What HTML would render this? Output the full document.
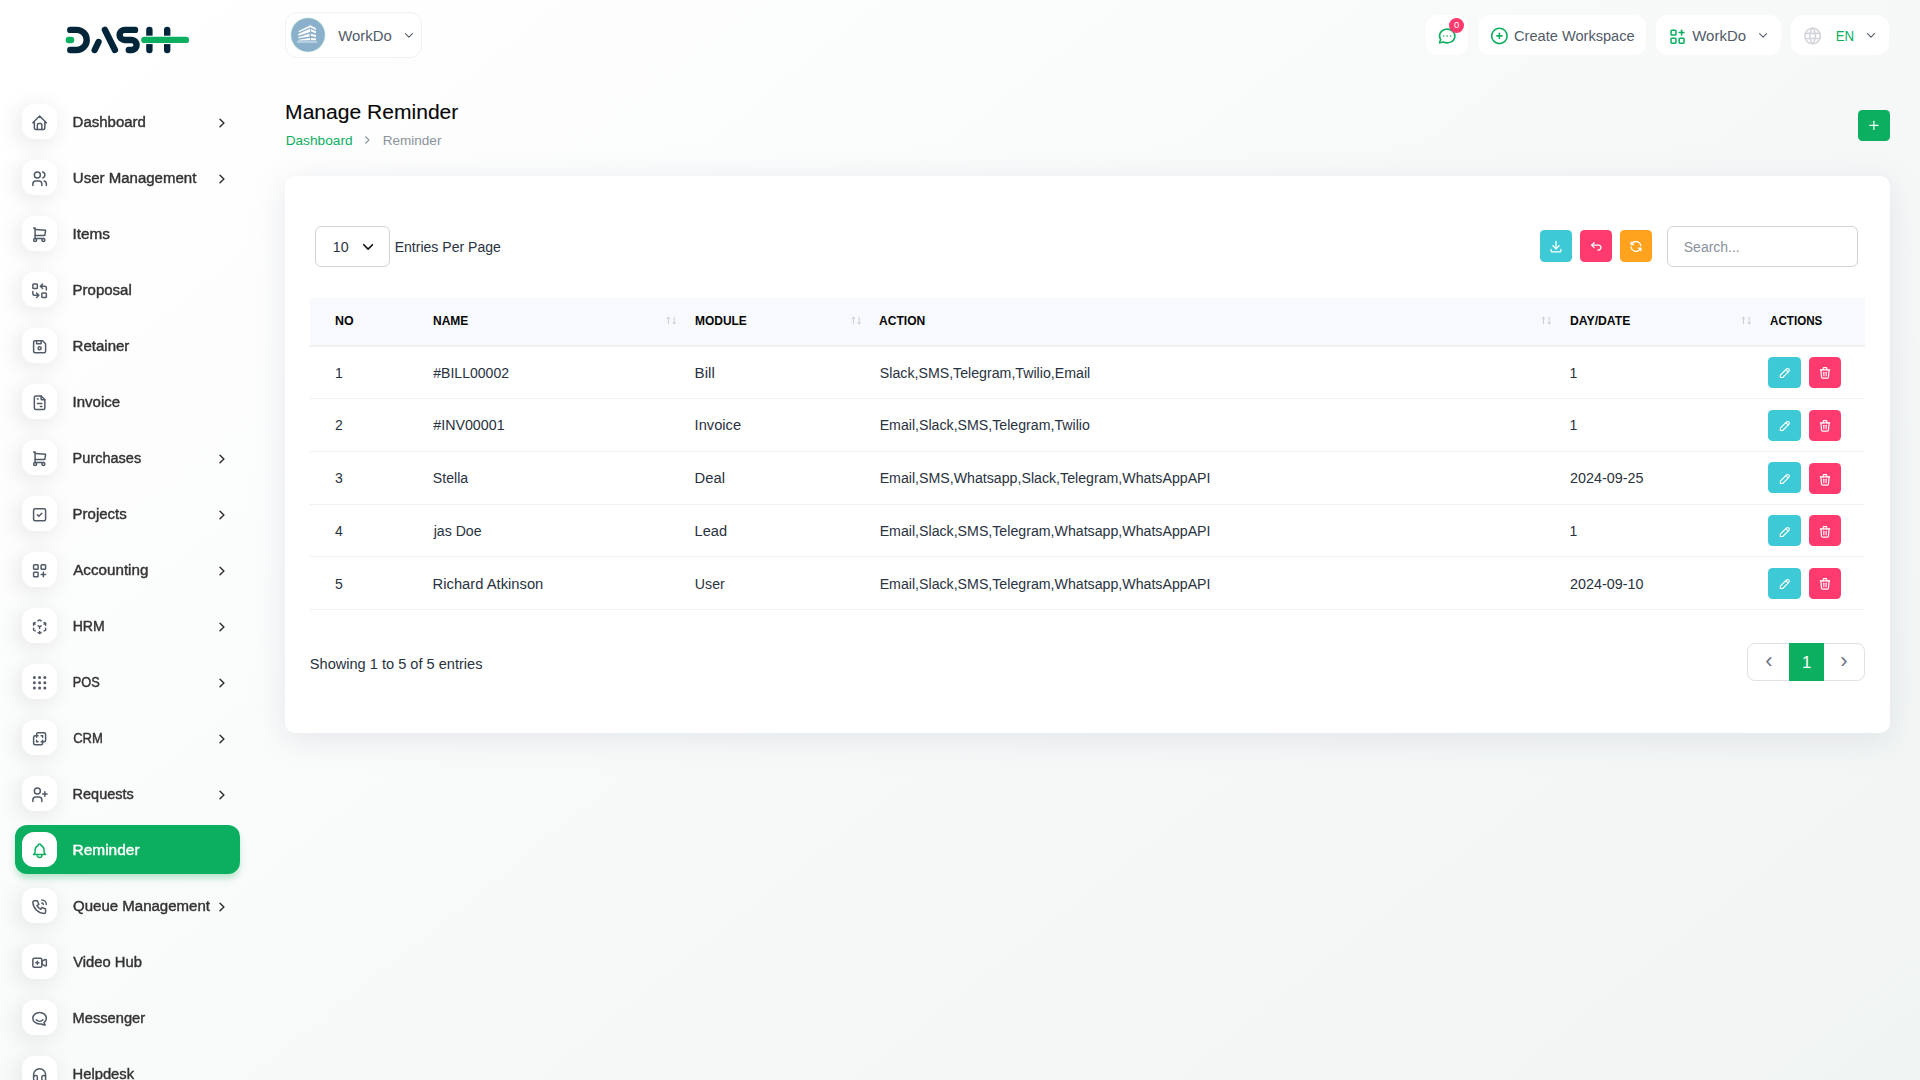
<!DOCTYPE html>
<html lang="en">
<head>
<meta charset="utf-8">
<title>Manage Reminder</title>
<style>
*{box-sizing:border-box;margin:0;padding:0}
html,body{width:1920px;height:1080px;overflow:hidden}
body{font-family:"Liberation Sans",sans-serif;font-size:14px;color:#293240;
 background:linear-gradient(141.55deg,rgba(240,244,243,0) 3.46%,#f0f4f3 99.86%),#fff;position:relative}
svg{display:block}
.t{position:absolute;white-space:nowrap;transform-origin:0 50%}
.sb{-webkit-text-stroke:.4px currentColor}
.mb{-webkit-text-stroke:.12px currentColor}
.ic{position:absolute;left:0;top:0;fill:none;stroke-linecap:round;stroke-linejoin:round}
.logo{position:absolute;left:60px;top:20px}
.nav{position:absolute;left:0;top:94px;width:280px;list-style:none;will-change:transform}
.nav li{position:relative;height:56px}
.nav .mi{position:absolute;left:22px;top:10px;width:35px;height:35px;border-radius:12px;background:#fff;
 box-shadow:-3px 4px 23px rgba(0,0,0,.1)}
.nav .mi svg{position:absolute;left:0;top:0;transform:translate(8.6px,9.7px);width:18px;height:18px;fill:none;stroke:#525b69;stroke-width:2;stroke-linecap:round;stroke-linejoin:round}
.nav .tx{position:absolute;left:72.6px;top:19px;line-height:18px;font-size:14px;color:#333;white-space:nowrap;-webkit-text-stroke:.4px #333;transform-origin:0 50%}
.nav .ch{position:absolute;left:216px;top:23px;width:12px;height:12px;fill:none;stroke:#333;stroke-width:1.5;stroke-linecap:round;stroke-linejoin:round}
.nav li.act::before{content:"";position:absolute;left:15px;top:3px;width:225px;height:49px;border-radius:12px;background:#0caf60;
 box-shadow:0 5px 7px -1px rgba(12,175,96,.3)}
.nav li.act .tx{color:#fff;-webkit-text-stroke:.4px #fff}
.nav li.act .mi{box-shadow:none}
.nav li.act .mi svg{stroke:#0caf60}
.hb{position:absolute;top:15px;height:40px;border-radius:12px;background:#fff}
.card{position:absolute;left:285px;top:176px;width:1605px;height:557px;background:#fff;border-radius:10px;
 box-shadow:0 6px 30px rgba(182,186,203,.3)}
.btn{position:absolute;border-radius:4.5px}
.fc{position:absolute;border:1px solid #ced4da;border-radius:6px;background:#fff}
table{position:absolute;left:310px;top:298px;width:1555px;border-collapse:collapse;table-layout:fixed}
th{height:48px;background:#f8f9fd;text-align:left;font-size:13px;font-weight:700;color:#060606;padding:0 0 2.5px 10.5px;border-bottom:2px solid #f1f1f1;position:relative;white-space:nowrap}
td{height:52.7px;padding:1px 0 0 10.5px;font-size:14px;color:#293240;border-bottom:1px solid #f1f1f1;white-space:nowrap;position:relative}
th:first-child,td:first-child{padding-left:25px}
th span,td span{display:inline-block;transform-origin:0 50%}
.so{position:absolute;right:8.5px;top:17px;width:10px;height:11px;fill:none;stroke:#c6c8cc;stroke-width:.9;stroke-linecap:round;stroke-linejoin:round}
.r2 td>span:not(.btn){position:relative;top:-1px}
td .btn{top:9.5px;height:31px}
tr+tr td .btn{top:10.5px}
tr.r3 td .btn+.btn{top:11.5px}
td .btn svg{position:absolute;left:50%;top:50%;margin:-7px 0 0 -7px;transform:translateY(.8px);width:14px;height:14px;fill:none;stroke:#fff;stroke-width:2;stroke-linecap:round;stroke-linejoin:round}
.pg{position:absolute;left:1747px;top:643px;width:118px;height:38px;border:1px solid #dee2e6;border-radius:8px;background:#fff}
</style>
</head>
<body>
<svg class="logo" width="140" height="40" viewBox="0 0 140 40" fill="none" stroke-linecap="round" stroke-linejoin="round" stroke-width="6.4" role="img" aria-label="DASH"><title>DASH</title>
<g stroke="#012639"><path d="M10.3 9.9H16.65A10.05 10.05 0 0 1 16.65 30H10.3"/><path d="M34.7 30L38.5 22"/><path d="M44.9 9.9L54.9 30"/><path d="M75 9.9H64.4A5.03 5.03 0 0 0 64.4 19.95H71.8A5.03 5.03 0 0 1 71.8 30H68.8"/><path d="M89.4 9.9V30"/><path d="M107.2 9.9V30"/></g>
<path d="M85.5 19.9H111" stroke="#fff" stroke-width="8.4" stroke-linecap="butt"/>
<g stroke="#0caf60"><path d="M8.85 19.95H11.05"/><path d="M84.4 19.9H125.9"/></g></svg>
<div class="hb" style="left:285px;top:12px;width:136.5px;height:46px;border:1px solid #f1f1f1"></div>
<svg style="position:absolute;left:290px;top:17px" width="36" height="36" viewBox="0 0 36 36"><circle cx="18" cy="17.9" r="17.4" fill="#c6edd8"/><circle cx="18" cy="17.9" r="16.75" fill="#8bb0cc"/>
<g transform="translate(1,.9)" fill="#fff"><path d="M7.64 13.19L19.44 7.41L24.9 10.42V12.04L19.44 9.26L7.87 14.26z"/><path d="M7.18 16.2L18.98 10.88V14.12L7.18 17.82z"/><path d="M7.18 19.44L18.52 15.97V18.52L7.18 20.37z"/><path d="M7.87 21.76L18.98 20.14V22.45L7.41 22.69z"/>
<path d="M19.9 11.11L25 13.43V15.28L19.9 13.66z"/><path d="M19.9 15.97L25 17.13V19.21L19.9 18.06z"/><path d="M19.9 20.14L25 20.6V22.45H19.9z"/><path d="M6.02 23.06H26.16V25.09H6.02z" opacity=".38"/></g></svg>
<span class="t" style="left:338px;top:28px;font-size:14px;line-height:16px;color:#525b69;transform:translateX(0.25px) scaleX(1.0646);">WorkDo</span>
<svg class="ic" style="transform:translate(401.9px,28.4px);width:14px;height:14px;stroke:#525b69;stroke-width:1.8;" viewBox="0 0 24 24"><path d="M6 9l6 6l6 -6"/></svg>
<div class="hb" style="left:1426px;width:42px"></div>
<svg class="ic" style="transform:translate(1436.95px,25.75px);width:20.5px;height:20.5px;stroke:#0caf60;stroke-width:1.85;" viewBox="0 0 24 24"><path d="M3 20l1.3 -3.9a9 8 0 1 1 3.4 2.9l-4.7 1"/><path d="M12 12v.01"/><path d="M8 12v.01"/><path d="M16 12v.01"/></svg>
<div style="position:absolute;left:1449px;top:17.7px;width:15px;height:15px;border-radius:50%;background:#ff3a6e"></div>
<span class="t" style="left:1453.9px;top:19px;font-size:9.5px;line-height:11px;color:#fff;">0</span>
<div class="hb" style="left:1478px;width:168px"></div>
<svg class="ic" style="transform:translate(1489.15px,25.65px);width:20.5px;height:20.5px;stroke:#0caf60;stroke-width:1.85;" viewBox="0 0 24 24"><circle cx="12" cy="12" r="9"/><path d="M9 12h6"/><path d="M12 9v6"/></svg>
<span class="t" style="left:1514.0px;top:28px;font-size:14px;line-height:16px;color:#525b69;transform:translateX(0.07px) scaleX(1.0419);">Create Workspace</span>
<div class="hb" style="left:1656px;width:125px"></div>
<svg class="ic" style="transform:translate(1667.8px,26.9px);width:19.5px;height:19.5px;stroke:#0caf60;stroke-width:1.9;" viewBox="0 0 24 24"><rect x="4" y="4" width="6" height="6" rx="1"/><rect x="4" y="14" width="6" height="6" rx="1"/><rect x="14" y="14" width="6" height="6" rx="1"/><path d="M14 7l6 0"/><path d="M17 4l0 6"/></svg>
<span class="t" style="left:1692.25px;top:28px;font-size:14px;line-height:16px;color:#525b69;transform:translateX(0.25px) scaleX(1.0686);">WorkDo</span>
<svg class="ic" style="transform:translate(1756.1px,28.4px);width:14px;height:14px;stroke:#525b69;stroke-width:1.8;" viewBox="0 0 24 24"><path d="M6 9l6 6l6 -6"/></svg>
<div class="hb" style="left:1791px;width:98px"></div>
<svg class="ic" style="transform:translate(1802.25px,25.6px);width:20.7px;height:20.7px;stroke:#d3d5da;stroke-width:1.8;" viewBox="0 0 24 24"><circle cx="12" cy="12" r="9"/><path d="M3.6 9h16.8"/><path d="M3.6 15h16.8"/><path d="M11.5 3a17 17 0 0 0 0 18"/><path d="M12.5 3a17 17 0 0 1 0 18"/></svg>
<span class="t" style="left:1835.9px;top:28px;font-size:14px;line-height:16px;color:#0caf60;transform:translateX(-0.29px) scaleX(0.9499);">EN</span>
<svg class="ic" style="transform:translate(1864px,28.4px);width:14px;height:14px;stroke:#525b69;stroke-width:1.8;" viewBox="0 0 24 24"><path d="M6 9l6 6l6 -6"/></svg>
<h1 class="t mb" style="left:285.8px;top:100px;font-size:20.5px;line-height:23px;color:#060606;transform:translateX(-0.89px) scaleX(1.0270);font-weight:400;">Manage Reminder</h1>
<span class="t" style="left:285.6px;top:134px;font-size:12.25px;line-height:14px;color:#0caf60;transform:translateX(-0.37px) scaleX(1.1166);">Dashboard</span>
<svg class="ic" style="transform:translate(360.8px,133.5px);width:13px;height:13px;stroke:#8b929a;stroke-width:2;" viewBox="0 0 24 24"><path d="M9 6l6 6l-6 6"/></svg>
<span class="t" style="left:382.6px;top:134px;font-size:12.25px;line-height:14px;color:#8b929a;transform:translateX(-0.36px) scaleX(1.1064);">Reminder</span>
<div class="btn" style="left:1858px;top:110px;width:32px;height:31px;background:#0caf60"></div>
<svg class="ic" style="transform:translate(1866.9px,118.4px);width:14px;height:14px;stroke:#fff;stroke-width:2.1;" viewBox="0 0 24 24"><path d="M12 5v14"/><path d="M5 12h14"/></svg>
<div class="card"></div>
<div class="fc" style="left:315px;top:226px;width:75px;height:41px"></div>
<span class="t" style="left:332.5px;top:239px;font-size:14px;line-height:16px;color:#293240;transform:translateX(-0.14px) scaleX(1.0140);">10</span>
<svg class="ic" style="transform:translate(359.45px,238.25px);width:17.3px;height:17.3px;stroke:#111;stroke-width:2.3;" viewBox="0 0 24 24"><path d="M6 9l6 6l6 -6"/></svg>
<span class="t" style="left:395.0px;top:239px;font-size:14px;line-height:16px;color:#293240;transform:translateX(-0.35px) scaleX(1.0036);">Entries Per Page</span>
<div class="btn" style="left:1540px;top:230px;width:32px;height:32px;background:#3ec9d6"></div>
<svg class="ic" style="transform:translate(1548.65px,239.05px);width:14.7px;height:14.7px;stroke:#fff;stroke-width:2.1;" viewBox="0 0 24 24"><path d="M4 17v2a2 2 0 0 0 2 2h12a2 2 0 0 0 2 -2v-2"/><path d="M7 11l5 5l5 -5"/><path d="M12 4l0 12"/></svg>
<div class="btn" style="left:1580px;top:230px;width:32px;height:32px;background:#ff3a6e"></div>
<svg class="ic" style="transform:translate(1588.65px,239.05px);width:14.7px;height:14.7px;stroke:#fff;stroke-width:2.1;" viewBox="0 0 24 24"><path d="M9 14l-4 -4l4 -4"/><path d="M5 10h11a4 4 0 1 1 0 8h-1"/></svg>
<div class="btn" style="left:1620px;top:230px;width:32px;height:32px;background:#ffa21d"></div>
<svg class="ic" style="transform:translate(1628.65px,239.05px);width:14.7px;height:14.7px;stroke:#fff;stroke-width:2.1;" viewBox="0 0 24 24"><path d="M20 11a8.1 8.1 0 0 0 -15.5 -2m-.5 -4v4h4"/><path d="M4 13a8.1 8.1 0 0 0 15.5 2m.5 4v-4h-4"/></svg>
<div class="fc" style="left:1667px;top:226px;width:191px;height:41px"></div>
<span class="t" style="left:1684.4px;top:239px;font-size:14px;line-height:16px;color:#8a919b;transform:translateX(-0.19px) scaleX(0.9968);">Search...</span>
<table><colgroup><col style="width:112.5px"><col style="width:262px"><col style="width:184.5px"><col style="width:690px"><col style="width:200.5px"><col style="width:105.5px"></colgroup><thead><tr><th><span style="transform:translateX(-0.03px) scaleX(0.9549)">NO</span></th><th><span style="transform:translateX(0.00px) scaleX(0.9227)">NAME</span><svg class="so" viewBox="0 0 10 11"><path d="M2.4 8.9V2.2M1.1 3.6L2.4 2.2L3.7 3.6"/><path d="M8.2 2.2V8.9M6.9 7.5L8.2 8.9L9.5 7.5"/></svg></th><th><span style="transform:translateX(0.00px) scaleX(0.9198)">MODULE</span><svg class="so" viewBox="0 0 10 11"><path d="M2.4 8.9V2.2M1.1 3.6L2.4 2.2L3.7 3.6"/><path d="M8.2 2.2V8.9M6.9 7.5L8.2 8.9L9.5 7.5"/></svg></th><th><span style="position:relative;left:-.6px;transform:translateX(0.06px) scaleX(0.9278)">ACTION</span><svg class="so" viewBox="0 0 10 11"><path d="M2.4 8.9V2.2M1.1 3.6L2.4 2.2L3.7 3.6"/><path d="M8.2 2.2V8.9M6.9 7.5L8.2 8.9L9.5 7.5"/></svg></th><th><span style="transform:translateX(-0.01px) scaleX(0.9385)">DAY/DATE</span><svg class="so" viewBox="0 0 10 11"><path d="M2.4 8.9V2.2M1.1 3.6L2.4 2.2L3.7 3.6"/><path d="M8.2 2.2V8.9M6.9 7.5L8.2 8.9L9.5 7.5"/></svg></th><th><span style="transform:translateX(0.07px) scaleX(0.8929)">ACTIONS</span></th></tr></thead><tbody><tr><td><span>1</span></td><td><span style="transform:translateX(0.25px) scaleX(1.0040)">#BILL00002</span></td><td><span style="transform:translateX(-0.43px) scaleX(1.0809)">Bill</span></td><td><span style="transform:translateX(-0.19px) scaleX(1.0128)">Slack,SMS,Telegram,Twilio,Email</span></td><td><span>1</span></td><td><span class="btn" style="left:8.5px;width:33px;background:#3ec9d6"><svg viewBox="0 0 24 24"><path d="M4 20h4l10.5 -10.5a2.828 2.828 0 1 0 -4 -4l-10.5 10.5v4"/><path d="M13.5 6.5l4 4"/></svg></span><span class="btn" style="left:49.5px;width:32px;background:#ff3a6e"><svg viewBox="0 0 24 24"><path d="M4 7l16 0"/><path d="M10 11l0 6"/><path d="M14 11l0 6"/><path d="M5 7l1 12a2 2 0 0 0 2 2h8a2 2 0 0 0 2 -2l1 -12"/><path d="M9 7v-3a1 1 0 0 1 1 -1h4a1 1 0 0 1 1 1v3"/></svg></span></td></tr><tr class="r2"><td><span>2</span></td><td><span style="transform:translateX(0.25px) scaleX(1.0182)">#INV00001</span></td><td><span style="transform:translateX(-0.40px) scaleX(1.0481)">Invoice</span></td><td><span style="transform:translateX(-0.36px) scaleX(1.0118)">Email,Slack,SMS,Telegram,Twilio</span></td><td><span>1</span></td><td><span class="btn" style="left:8.5px;width:33px;background:#3ec9d6"><svg viewBox="0 0 24 24"><path d="M4 20h4l10.5 -10.5a2.828 2.828 0 1 0 -4 -4l-10.5 10.5v4"/><path d="M13.5 6.5l4 4"/></svg></span><span class="btn" style="left:49.5px;width:32px;background:#ff3a6e"><svg viewBox="0 0 24 24"><path d="M4 7l16 0"/><path d="M10 11l0 6"/><path d="M14 11l0 6"/><path d="M5 7l1 12a2 2 0 0 0 2 2h8a2 2 0 0 0 2 -2l1 -12"/><path d="M9 7v-3a1 1 0 0 1 1 -1h4a1 1 0 0 1 1 1v3"/></svg></span></td></tr><tr class="r3"><td><span>3</span></td><td><span style="transform:translateX(-0.19px) scaleX(1.0080)">Stella</span></td><td><span style="transform:translateX(-0.40px) scaleX(1.0550)">Deal</span></td><td><span style="transform:translateX(-0.36px) scaleX(1.0125)">Email,SMS,Whatsapp,Slack,Telegram,WhatsAppAPI</span></td><td><span style="transform:translateX(0.08px) scaleX(1.0264)">2024-09-25</span></td><td><span class="btn" style="left:8.5px;width:33px;background:#3ec9d6"><svg viewBox="0 0 24 24"><path d="M4 20h4l10.5 -10.5a2.828 2.828 0 1 0 -4 -4l-10.5 10.5v4"/><path d="M13.5 6.5l4 4"/></svg></span><span class="btn" style="left:49.5px;width:32px;background:#ff3a6e"><svg viewBox="0 0 24 24"><path d="M4 7l16 0"/><path d="M10 11l0 6"/><path d="M14 11l0 6"/><path d="M5 7l1 12a2 2 0 0 0 2 2h8a2 2 0 0 0 2 -2l1 -12"/><path d="M9 7v-3a1 1 0 0 1 1 -1h4a1 1 0 0 1 1 1v3"/></svg></span></td></tr><tr><td><span>4</span></td><td><span style="transform:translateX(0.69px) scaleX(1.0087)">jas Doe</span></td><td><span style="transform:translateX(-0.39px) scaleX(1.0405)">Lead</span></td><td><span style="transform:translateX(-0.36px) scaleX(1.0125)">Email,Slack,SMS,Telegram,Whatsapp,WhatsAppAPI</span></td><td><span>1</span></td><td><span class="btn" style="left:8.5px;width:33px;background:#3ec9d6"><svg viewBox="0 0 24 24"><path d="M4 20h4l10.5 -10.5a2.828 2.828 0 1 0 -4 -4l-10.5 10.5v4"/><path d="M13.5 6.5l4 4"/></svg></span><span class="btn" style="left:49.5px;width:32px;background:#ff3a6e"><svg viewBox="0 0 24 24"><path d="M4 7l16 0"/><path d="M10 11l0 6"/><path d="M14 11l0 6"/><path d="M5 7l1 12a2 2 0 0 0 2 2h8a2 2 0 0 0 2 -2l1 -12"/><path d="M9 7v-3a1 1 0 0 1 1 -1h4a1 1 0 0 1 1 1v3"/></svg></span></td></tr><tr><td><span>5</span></td><td><span style="transform:translateX(-0.40px) scaleX(1.0539)">Richard Atkinson</span></td><td><span style="transform:translateX(-0.14px) scaleX(1.0117)">User</span></td><td><span style="transform:translateX(-0.36px) scaleX(1.0125)">Email,Slack,SMS,Telegram,Whatsapp,WhatsAppAPI</span></td><td><span style="transform:translateX(0.08px) scaleX(1.0232)">2024-09-10</span></td><td><span class="btn" style="left:8.5px;width:33px;background:#3ec9d6"><svg viewBox="0 0 24 24"><path d="M4 20h4l10.5 -10.5a2.828 2.828 0 1 0 -4 -4l-10.5 10.5v4"/><path d="M13.5 6.5l4 4"/></svg></span><span class="btn" style="left:49.5px;width:32px;background:#ff3a6e"><svg viewBox="0 0 24 24"><path d="M4 7l16 0"/><path d="M10 11l0 6"/><path d="M14 11l0 6"/><path d="M5 7l1 12a2 2 0 0 0 2 2h8a2 2 0 0 0 2 -2l1 -12"/><path d="M9 7v-3a1 1 0 0 1 1 -1h4a1 1 0 0 1 1 1v3"/></svg></span></td></tr></tbody></table>
<span class="t" style="left:310.3px;top:656px;font-size:14px;line-height:16px;color:#293240;transform:translateX(-0.21px) scaleX(1.0416);">Showing 1 to 5 of 5 entries</span>
<div class="pg"></div>
<div style="position:absolute;left:1789px;top:643px;width:35px;height:38px;background:#0caf60"></div>
<span class="t" style="left:1765.2px;top:648px;font-size:22px;line-height:25px;color:#6c7685;">&lsaquo;</span>
<span class="t" style="left:1840.2px;top:648px;font-size:22px;line-height:25px;color:#6c7685;">&rsaquo;</span>
<span class="t" style="left:1801.9px;top:653px;font-size:16.8px;line-height:19px;color:#fff;">1</span>
<ul class="nav">
<li><span class="mi"><svg viewBox="0 0 24 24"><path d="M5 12l-2 0l9 -9l9 9l-2 0"/><path d="M5 12v7a2 2 0 0 0 2 2h10a2 2 0 0 0 2 -2v-7"/><path d="M9 21v-6a2 2 0 0 1 2 -2h2a2 2 0 0 1 2 2v6"/></svg></span><span class="tx" style="transform:translateX(-0.42px) scaleX(1.0712)">Dashboard</span><svg class="ch" viewBox="0 0 12 12"><path d="M4 2.2l3.9 3.8l-3.9 3.8"/></svg></li>
<li><span class="mi"><svg viewBox="0 0 24 24"><circle cx="9" cy="7" r="4"/><path d="M3 21v-2a4 4 0 0 1 4 -4h4a4 4 0 0 1 4 4v2"/><path d="M16 3.13a4 4 0 0 1 0 7.75"/><path d="M21 21v-2a4 4 0 0 0 -3 -3.85"/></svg></span><span class="tx" style="transform:translateX(-0.19px) scaleX(1.0727)">User Management</span><svg class="ch" viewBox="0 0 12 12"><path d="M4 2.2l3.9 3.8l-3.9 3.8"/></svg></li>
<li><span class="mi"><svg viewBox="0 0 24 24"><circle cx="6" cy="19" r="2"/><circle cx="17" cy="19" r="2"/><path d="M17 17h-11v-14h-2"/><path d="M6 5l14 1l-1 7h-13"/></svg></span><span class="tx" style="transform:translateX(-0.45px) scaleX(1.0934)">Items</span></li>
<li><span class="mi"><svg viewBox="0 0 24 24"><rect x="3" y="3" width="6" height="6" rx="1"/><rect x="15" y="15" width="6" height="6" rx="1"/><path d="M21 11v-3a2 2 0 0 0 -2 -2h-6l3 3m0 -6l-3 3"/><path d="M3 13v3a2 2 0 0 0 2 2h6l-3 -3m0 6l3 -3"/></svg></span><span class="tx" style="transform:translateX(-0.42px) scaleX(1.0707)">Proposal</span></li>
<li><span class="mi"><svg viewBox="0 0 24 24"><path d="M6 4h10l4 4v10a2 2 0 0 1 -2 2h-12a2 2 0 0 1 -2 -2v-12a2 2 0 0 1 2 -2"/><circle cx="12" cy="14" r="2"/><path d="M14 4l0 4l-6 0l0 -4"/></svg></span><span class="tx" style="transform:translateX(-0.42px) scaleX(1.0724)">Retainer</span></li>
<li><span class="mi"><svg viewBox="0 0 24 24"><path d="M14 3v4a1 1 0 0 0 1 1h4"/><path d="M17 21h-10a2 2 0 0 1 -2 -2v-14a2 2 0 0 1 2 -2h7l5 5v11a2 2 0 0 1 -2 2z"/><path d="M9 7l1 0"/><path d="M9 13l6 0"/><path d="M13 17l2 0"/></svg></span><span class="tx" style="transform:translateX(-0.42px) scaleX(1.0715)">Invoice</span></li>
<li><span class="mi"><svg viewBox="0 0 24 24"><circle cx="6" cy="19" r="2"/><circle cx="17" cy="19" r="2"/><path d="M17 17h-11v-14h-2"/><path d="M6 5l14 1l-1 7h-13"/></svg></span><span class="tx" style="transform:translateX(-0.38px) scaleX(1.0369)">Purchases</span><svg class="ch" viewBox="0 0 12 12"><path d="M4 2.2l3.9 3.8l-3.9 3.8"/></svg></li>
<li><span class="mi"><svg viewBox="0 0 24 24"><rect x="4" y="4" width="16" height="16" rx="2"/><path d="M9 12l2 2l4 -4"/></svg></span><span class="tx" style="transform:translateX(-0.42px) scaleX(1.0705)">Projects</span><svg class="ch" viewBox="0 0 12 12"><path d="M4 2.2l3.9 3.8l-3.9 3.8"/></svg></li>
<li><span class="mi"><svg viewBox="0 0 24 24"><rect x="4" y="4" width="6" height="6" rx="1"/><rect x="14" y="4" width="6" height="6" rx="1"/><rect x="4" y="14" width="6" height="6" rx="1"/><path d="M14 17h6m-3 -3v6"/></svg></span><span class="tx" style="transform:translateX(0.25px) scaleX(1.0842)">Accounting</span><svg class="ch" viewBox="0 0 12 12"><path d="M4 2.2l3.9 3.8l-3.9 3.8"/></svg></li>
<li><span class="mi"><svg viewBox="0 0 24 24"><path d="M6 17.6l-2 -1.1v-2.5"/><path d="M4 10v-2.5l2 -1.1"/><path d="M10 4.1l2 -1.1l2 1.1"/><path d="M18 6.4l2 1.1v2.5"/><path d="M20 14v2.5l-2 1.12"/><path d="M14 19.9l-2 1.1l-2 -1.1"/><path d="M12 12l2 -1.1"/><path d="M18 8.6l2 -1.1"/><path d="M12 12l0 2.5"/><path d="M12 18.5l0 2.5"/><path d="M12 12l-2 -1.12"/><path d="M6 8.6l-2 -1.1"/></svg></span><span class="tx" style="transform:translateX(-0.35px) scaleX(1.0052)">HRM</span><svg class="ch" viewBox="0 0 12 12"><path d="M4 2.2l3.9 3.8l-3.9 3.8"/></svg></li>
<li><span class="mi"><svg viewBox="0 0 24 24"><circle cx="5" cy="5" r="1"/><circle cx="12" cy="5" r="1"/><circle cx="19" cy="5" r="1"/><circle cx="5" cy="12" r="1"/><circle cx="12" cy="12" r="1"/><circle cx="19" cy="12" r="1"/><circle cx="5" cy="19" r="1"/><circle cx="12" cy="19" r="1"/><circle cx="19" cy="19" r="1"/></svg></span><span class="tx" style="transform:translateX(-0.25px) scaleX(0.9145)">POS</span><svg class="ch" viewBox="0 0 12 12"><path d="M4 2.2l3.9 3.8l-3.9 3.8"/></svg></li>
<li><span class="mi"><svg viewBox="0 0 24 24"><path d="M16 16v2a2 2 0 0 1 -2 2h-8a2 2 0 0 1 -2 -2v-8a2 2 0 0 1 2 -2h2v-2a2 2 0 0 1 2 -2h8a2 2 0 0 1 2 2v8a2 2 0 0 1 -2 2h-2"/><path d="M10 8l-2 0l0 2"/><path d="M8 14l0 2l2 0"/><path d="M14 8l2 0l0 2"/><path d="M16 14l0 2l-2 0"/></svg></span><span class="tx" style="transform:translateX(0.14px) scaleX(0.9329)">CRM</span><svg class="ch" viewBox="0 0 12 12"><path d="M4 2.2l3.9 3.8l-3.9 3.8"/></svg></li>
<li><span class="mi"><svg viewBox="0 0 24 24"><circle cx="9" cy="7" r="4"/><path d="M3 21v-2a4 4 0 0 1 4 -4h4a4 4 0 0 1 4 4v2"/><path d="M16 11h6m-3 -3v6"/></svg></span><span class="tx" style="transform:translateX(-0.38px) scaleX(1.0327)">Requests</span><svg class="ch" viewBox="0 0 12 12"><path d="M4 2.2l3.9 3.8l-3.9 3.8"/></svg></li>
<li class="act"><span class="mi"><svg viewBox="0 0 24 24"><path d="M10 5a2 2 0 1 1 4 0a7 7 0 0 1 4 6v3a4 4 0 0 0 2 3h-16a4 4 0 0 0 2 -3v-3a7 7 0 0 1 4 -6"/><path d="M9 17v1a3 3 0 0 0 6 0v-1"/></svg></span><span class="tx" style="transform:translateX(-0.46px) scaleX(1.1045)">Reminder</span></li>
<li><span class="mi"><svg viewBox="0 0 24 24"><path d="M5 4h4l2 5l-2.5 1.5a11 11 0 0 0 5 5l1.5 -2.5l5 2v4a2 2 0 0 1 -2 2a16 16 0 0 1 -15 -15a2 2 0 0 1 2 -2"/><path d="M15 7a2 2 0 0 1 2 2"/><path d="M15 3a6 6 0 0 1 6 6"/></svg></span><span class="tx" style="transform:translateX(0.05px) scaleX(1.0726)">Queue Management</span><svg class="ch" viewBox="0 0 12 12"><path d="M4 2.2l3.9 3.8l-3.9 3.8"/></svg></li>
<li><span class="mi"><svg viewBox="0 0 24 24"><path d="M15 10l4.553 -2.276a1 1 0 0 1 1.447 .894v6.764a1 1 0 0 1 -1.447 .894l-4.553 -2.276v-4z"/><rect x="3" y="6" width="12" height="12" rx="2"/><path d="M7 12l4 0"/><path d="M9 10l0 4"/></svg></span><span class="tx" style="transform:translateX(0.25px) scaleX(1.0533)">Video Hub</span></li>
<li><span class="mi"><svg viewBox="0 0 24 24"><path d="M17.802 17.292s.077 -.055 .2 -.149c1.843 -1.425 3 -3.49 3 -5.789c0 -4.286 -4.03 -7.764 -9 -7.764c-4.97 0 -9 3.478 -9 7.764c0 4.288 4.03 7.646 9 7.646c.424 0 1.12 -.028 2.088 -.084c1.262 .82 3.104 1.493 4.716 1.493c.499 0 .734 -.41 .414 -.828c-.486 -.596 -1.156 -1.551 -1.416 -2.29z"/><path d="M7.5 13.5c2.5 2.5 6.5 2.5 9 0"/></svg></span><span class="tx" style="transform:translateX(-0.39px) scaleX(1.0464)">Messenger</span></li>
<li><span class="mi"><svg viewBox="0 0 24 24"><rect x="4" y="13" width="5" height="7" rx="2"/><rect x="15" y="13" width="5" height="7" rx="2"/><path d="M4 15v-3a8 8 0 0 1 16 0v3"/></svg></span><span class="tx" style="transform:translateX(-0.40px) scaleX(1.0524)">Helpdesk</span></li>
</ul>
</body>
</html>
